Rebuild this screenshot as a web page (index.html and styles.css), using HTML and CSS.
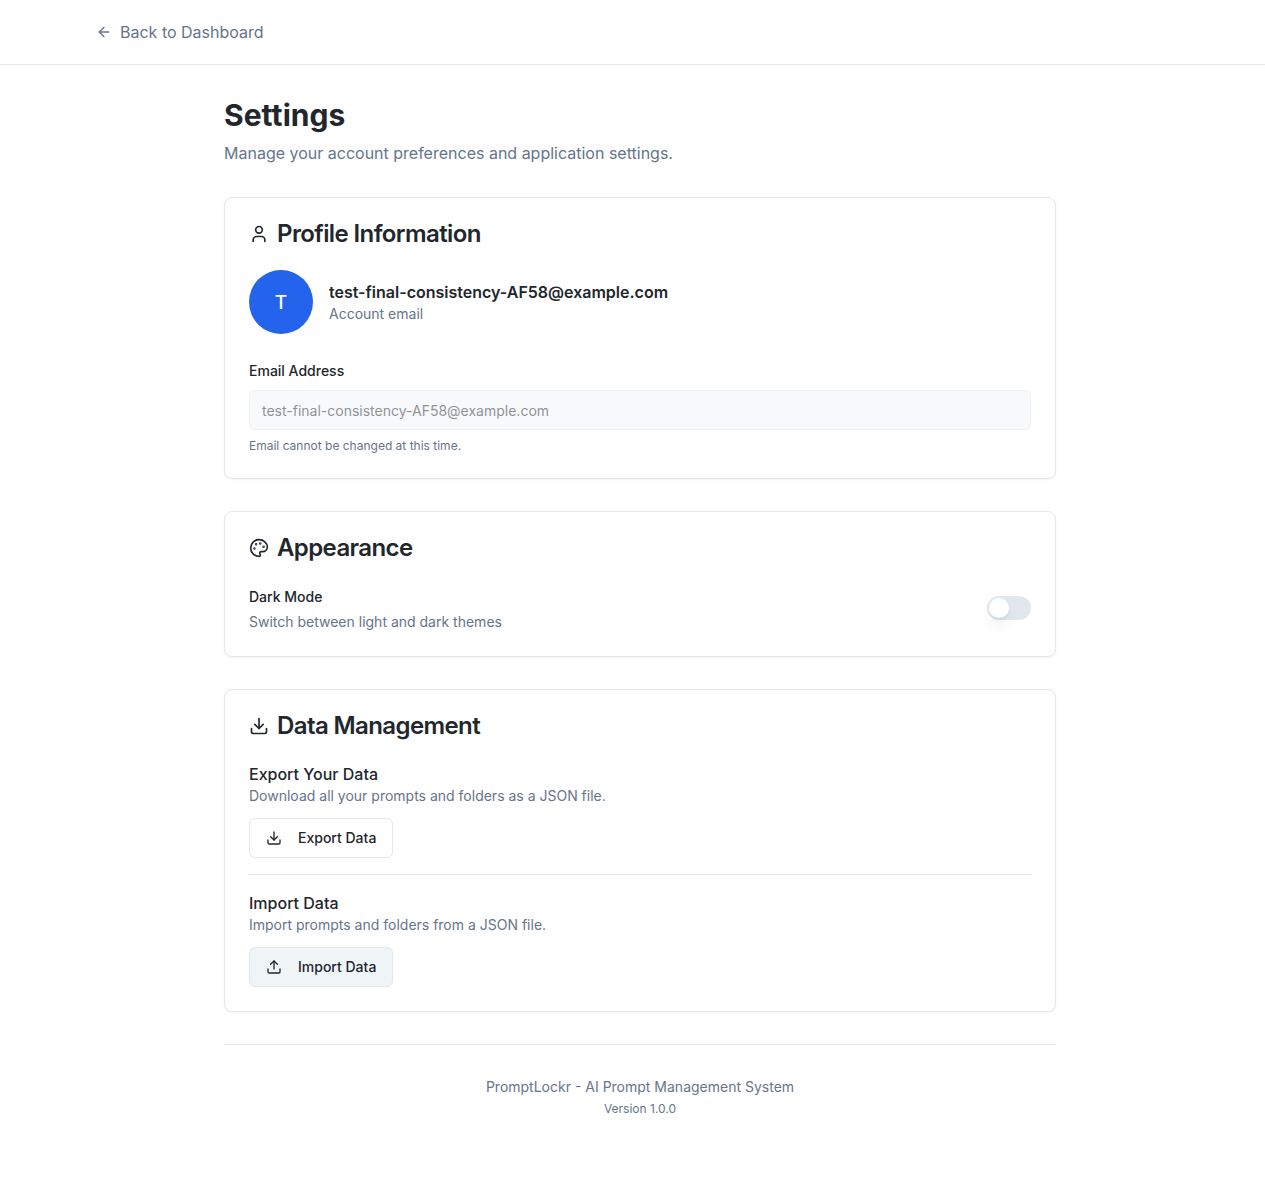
FILE: index.html
```html
<!DOCTYPE html>
<html lang="en">
<head>
<meta charset="utf-8">
<title>Settings - PromptLockr</title>
<link rel="stylesheet" href="styles.css">
</head>
<body>
<div class="page">
  <header class="topbar">
    <a class="back">
      <svg class="icon-sm" viewBox="0 0 24 24"><path d="m12 19-7-7 7-7"/><path d="M19 12H5"/></svg>
      <span>Back to Dashboard</span>
    </a>
  </header>
  <main class="content">
    <div class="intro">
      <h1>Settings</h1>
      <p>Manage your account preferences and application settings.</p>
    </div>

    <section class="card">
      <h2 class="card-title">
        <svg class="icon" viewBox="0 0 24 24"><path d="M19 21v-2a4 4 0 0 0-4-4H9a4 4 0 0 0-4 4v2"/><circle cx="12" cy="7" r="4"/></svg>
        <span>Profile Information</span>
      </h2>
      <div class="profile">
        <div class="avatar">T</div>
        <div>
          <p class="profile-name">test-final-consistency-AF58@example.com</p>
          <p class="muted">Account email</p>
        </div>
      </div>
      <div class="field">
        <label class="label" for="email">Email Address</label>
        <input class="input" id="email" type="email" value="test-final-consistency-AF58@example.com" disabled>
        <p class="hint">Email cannot be changed at this time.</p>
      </div>
    </section>

    <section class="card">
      <h2 class="card-title">
        <svg class="icon" viewBox="0 0 24 24"><circle cx="13.5" cy="6.5" r=".5" fill="currentColor"/><circle cx="17.5" cy="10.5" r=".5" fill="currentColor"/><circle cx="8.5" cy="7.5" r=".5" fill="currentColor"/><circle cx="6.5" cy="12.5" r=".5" fill="currentColor"/><path d="M12 2C6.5 2 2 6.5 2 12s4.5 10 10 10c.926 0 1.648-.746 1.648-1.688 0-.437-.18-.835-.437-1.125-.29-.289-.438-.652-.438-1.125a1.64 1.64 0 0 1 1.668-1.668h1.996c3.051 0 5.555-2.503 5.555-5.554C21.965 6.012 17.461 2 12 2z"/></svg>
        <span>Appearance</span>
      </h2>
      <div class="setting">
        <div class="setting-text">
          <span class="label">Dark Mode</span>
          <p class="muted">Switch between light and dark themes</p>
        </div>
        <button class="switch" type="button" role="switch" aria-checked="false" aria-label="Dark Mode"><span class="thumb"></span></button>
      </div>
    </section>

    <section class="card">
      <h2 class="card-title">
        <svg class="icon" viewBox="0 0 24 24"><path d="M21 15v4a2 2 0 0 1-2 2H5a2 2 0 0 1-2-2v-4"/><path d="m7 10 5 5 5-5"/><path d="M12 15V3"/></svg>
        <span>Data Management</span>
      </h2>
      <div class="data-group">
        <h3>Export Your Data</h3>
        <p class="muted">Download all your prompts and folders as a JSON file.</p>
        <button class="btn" type="button">
          <svg class="icon-sm" viewBox="0 0 24 24"><path d="M21 15v4a2 2 0 0 1-2 2H5a2 2 0 0 1-2-2v-4"/><path d="m7 10 5 5 5-5"/><path d="M12 15V3"/></svg>
          <span>Export Data</span>
        </button>
      </div>
      <div class="data-group divided">
        <h3>Import Data</h3>
        <p class="muted">Import prompts and folders from a JSON file.</p>
        <button class="btn btn-active" type="button">
          <svg class="icon-sm" viewBox="0 0 24 24"><path d="M21 15v4a2 2 0 0 1-2 2H5a2 2 0 0 1-2-2v-4"/><path d="m17 8-5-5-5 5"/><path d="M12 3v12"/></svg>
          <span>Import Data</span>
        </button>
      </div>
    </section>

    <footer class="footer">
      <p class="muted">PromptLockr - AI Prompt Management System</p>
      <p class="hint">Version 1.0.0</p>
    </footer>
  </main>
</div>
</body>
</html>
```

FILE: styles.css
```css
*, *::before, *::after { box-sizing: border-box; }
html { overflow: hidden; }
body {
  margin: 0;
  background: #fff;
  color: #22262d;
  font: 16px/24px Inter, "Liberation Sans", sans-serif;
}
h1, h2, h3, p { margin: 0; }
svg {
  flex: none;
  fill: none;
  stroke: currentColor;
  stroke-width: 2;
  stroke-linecap: round;
  stroke-linejoin: round;
}
.icon { width: 20px; height: 20px; }
.icon-sm { width: 16px; height: 16px; }
.page { width: 1280px; min-height: 1181px; }
.topbar {
  display: flex;
  align-items: center;
  height: 65px;
  padding: 0 96px;
  border-bottom: 1px solid #e1e7ef;
}
.back { display: flex; align-items: center; gap: 8px; color: #65758b; }
.content { width: 896px; margin: 0 auto; padding: 32px; }
.intro { margin-bottom: 32px; }
.intro h1 { margin-bottom: 8px; font-size: 30px; line-height: 36px; font-weight: 700; letter-spacing: .05px; }
.intro p { color: #65758b; }
.card {
  margin-bottom: 32px;
  padding: 24px;
  border: 1px solid #e1e7ef;
  border-radius: 8px;
  background: #fff;
  box-shadow: 0 1px 2px rgba(0, 0, 0, .05);
}
.card-title {
  display: flex;
  align-items: center;
  gap: 8px;
  margin-bottom: 24px;
  font-size: 24px;
  line-height: 24px;
  font-weight: 600;
  letter-spacing: -.025em;
}
.muted { color: #65758b; font-size: 14px; line-height: 20px; }
.hint { color: #65758b; font-size: 12px; line-height: 16px; }
.profile { display: flex; align-items: center; gap: 16px; margin-bottom: 24px; }
.avatar {
  display: flex;
  align-items: center;
  justify-content: center;
  width: 64px;
  height: 64px;
  padding-top: 1px;
  border-radius: 50%;
  background: #2463eb;
  color: #fff;
  font-size: 19px;
  line-height: 28px;
  font-weight: 500;
}
.profile-name { font-weight: 600; }
.label { display: block; height: 24px; font-size: 14px; line-height: 26px; font-weight: 500; }
.input {
  display: block;
  width: 100%;
  height: 40px;
  margin: 8px 0;
  padding: 8px 12px;
  border: 1px solid #e1e7ef;
  border-radius: 6px;
  background: #f1f5f9;
  color: #22262d;
  font: 14px/20px Inter, "Liberation Sans", sans-serif;
  opacity: .5;
}
.setting { display: flex; align-items: center; justify-content: space-between; }
.setting-text { display: flex; flex-direction: column; gap: 4px; }
.switch {
  display: flex;
  align-items: center;
  width: 44px;
  height: 24px;
  padding: 2px;
  border: 0;
  border-radius: 12px;
  background: #e1e7ef;
}
.thumb {
  width: 20px;
  height: 20px;
  border-radius: 50%;
  background: #fff;
  box-shadow: 0 10px 15px -3px rgba(0, 0, 0, .1), 0 4px 6px -4px rgba(0, 0, 0, .1);
}
.data-group h3 { font-size: 16px; line-height: 24px; font-weight: 500; }
.divided { margin-top: 16px; padding-top: 16px; border-top: 1px solid #e1e7ef; }
.btn {
  display: flex;
  align-items: center;
  gap: 16px;
  height: 40px;
  margin-top: 12px;
  padding: 0 16px;
  border: 1px solid #e1e7ef;
  border-radius: 6px;
  background: #fff;
  color: #22262d;
  font: 500 14px/20px Inter, "Liberation Sans", sans-serif;
}
.btn-active { background: #eff4f7; }
.footer {
  display: flex;
  flex-direction: column;
  align-items: center;
  gap: 4px;
  padding-top: 32px;
  border-top: 1px solid #e1e7ef;
}
```
